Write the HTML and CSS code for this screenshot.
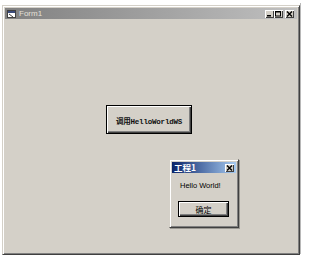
FILE: index.html
```html
<!DOCTYPE html>
<html>
<head>
<meta charset="utf-8">
<link rel="stylesheet" href="styles.css">
</head>
<body>
<div class="window">
  <div class="titlebar">
    <svg class="appicon" width="9" height="8" viewBox="0 0 9 8">
      <rect x="0.5" y="0.5" width="8" height="7" fill="#ffffff" stroke="#404040"/>
      <rect x="1" y="1" width="7" height="2" fill="#3a4a7a"/>
      <path d="M2 4 L6 7" stroke="#404040" stroke-width="1"/>
    </svg>
    <span class="title">Form1</span>
    <span class="spacer"></span>
    <span class="cbtn"><svg width="9" height="8" viewBox="0 0 9 8"><rect x="2" y="5" width="4" height="1.5" fill="#000"/></svg></span>
    <span class="cbtn"><svg width="9" height="8" viewBox="0 0 9 8"><rect x="1.5" y="1.5" width="5" height="4.5" fill="none" stroke="#000"/><rect x="1.5" y="1" width="5" height="1.5" fill="#000"/></svg></span>
    <span class="cbtn close"><svg width="9" height="8" viewBox="0 0 9 8"><path d="M2 1.5 L7 6.5 M7 1.5 L2 6.5" stroke="#000" stroke-width="1.4"/></svg></span>
  </div>
  <div class="client">
    <div class="btn-default"><div class="btn-face">调用HelloWorldWS</div></div>
  </div>
  <div class="dialog">
    <div class="dtitlebar">
      <span class="dtitle">工程1</span>
      <span class="spacer"></span>
      <span class="cbtn dclose"><svg width="9" height="8" viewBox="0 0 9 8"><path d="M2 1.5 L7 6.5 M7 1.5 L2 6.5" stroke="#000" stroke-width="1.4"/></svg></span>
    </div>
    <div class="dmsg">Hello World!</div>
    <div class="okwrap"><div class="okbtn"><div class="okface">确定</div></div></div>
  </div>
</div>
<div class="edge"></div>
</body>
</html>
```
FILE: styles.css
```css
html, body {
  margin: 0;
  padding: 0;
}
body {
  width: 312px;
  height: 257px;
  background: #ffffff;
  position: relative;
  overflow: hidden;
  font-family: "Liberation Sans", "Noto Sans CJK SC", sans-serif;
}
.window {
  margin: 5px 0 0 2px;
  width: 298px;
  height: 250px;
  box-sizing: border-box;
  background: #d4d0c8;
  border-top: 1px solid #d4d0c8;
  border-left: 1px solid #d4d0c8;
  border-right: 1px solid #404040;
  border-bottom: 1px solid #404040;
  box-shadow: inset 1px 1px #ffffff, inset -1px -1px #808080;
  padding: 2px;
  position: relative;
  display: flex;
  flex-direction: column;
}
.titlebar {
  height: 11px;
  background: linear-gradient(to right, #808080, #c0c0c0);
  display: flex;
  align-items: center;
  padding: 0 3px 0 2px;
}
.appicon {
  display: block;
  margin-right: 3px;
}
.title {
  color: #e4e0d8;
  font-size: 8px;
  line-height: 11px;
}
.spacer {
  flex: 1;
}
.cbtn {
  width: 9px;
  height: 8px;
  background: #d4d0c8;
  box-shadow: inset 1px 1px #ffffff, inset -1px -1px #404040;
  display: block;
}
.cbtn svg {
  display: block;
}
.cbtn.close {
  margin-left: 2px;
}
.client {
  flex: 1;
  padding: 86px 0 0 101px;
}
.btn-default {
  width: 86px;
  height: 29px;
  box-sizing: border-box;
  border: 1px solid #000000;
}
.btn-face {
  height: 100%;
  box-sizing: border-box;
  box-shadow: inset 1px 1px #ffffff, inset -1px -1px #404040, inset -2px -2px #808080;
  display: flex;
  align-items: center;
  justify-content: center;
  font-family: "Liberation Mono", "Noto Sans CJK SC", monospace;
  font-size: 7.5px;
  font-weight: bold;
  letter-spacing: -0.2px;
  color: #111111;
  padding-top: 1px;
}
.dialog {
  position: absolute;
  left: 166px;
  top: 153px;
  width: 70px;
  height: 69px;
  box-sizing: border-box;
  background: #d4d0c8;
  border-top: 1px solid #d4d0c8;
  border-left: 1px solid #d4d0c8;
  border-right: 1px solid #404040;
  border-bottom: 1px solid #404040;
  box-shadow: inset 1px 1px #ffffff, inset -1px -1px #808080, 1px 1px 0 #9a9892;
  padding: 2px;
}
.dtitlebar {
  height: 11px;
  background: linear-gradient(to right, #0a246a, #a6caf0);
  display: flex;
  align-items: center;
  padding: 0 2px 0 2px;
}
.dtitle {
  color: #ffffff;
  font-weight: bold;
  font-size: 8.5px;
  line-height: 11px;
  font-family: "Noto Sans CJK SC", sans-serif;
}
.dmsg {
  font-size: 7.5px;
  color: #000000;
  padding: 8px 0 0 8px;
  line-height: 9px;
}
.okwrap {
  padding: 11px 0 0 6px;
}
.okbtn {
  width: 51px;
  height: 16px;
  box-sizing: border-box;
  border: 1px solid #000000;
}
.okface {
  height: 100%;
  box-sizing: border-box;
  box-shadow: inset 1px 1px #ffffff, inset -1px -1px #404040, inset -2px -2px #808080;
  display: flex;
  align-items: center;
  justify-content: center;
  font-size: 8px;
  font-family: "Noto Sans CJK SC", sans-serif;
  color: #000000;
}
.edge {
  position: absolute;
  left: 300px;
  top: 3px;
  width: 1px;
  height: 251px;
  background: #b8b8b8;
}
```
